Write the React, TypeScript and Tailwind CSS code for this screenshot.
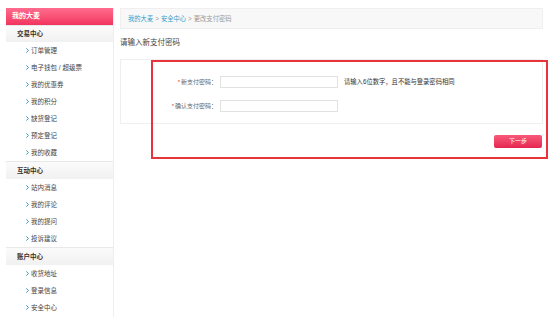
const font = { fontFamily: '"Liberation Sans", "Noto Sans CJK SC", sans-serif' }

const groups = [
  { title: '交易中心', items: ['订单管理', '电子钱包 / 超级票', '我的优惠券', '我的积分', '缺货登记', '预定登记', '我的收藏'] },
  { title: '互动中心', items: ['站内消息', '我的评论', '我的提问', '投诉建议'] },
  { title: '账户中心', items: ['收货地址', '登录信息', '安全中心'] },
]

const Chevron = () => (
  <svg width="3" height="5" viewBox="0 0 3 5" className="mr-[2px] shrink-0">
    <path d="M0.4 0.4 L2.4 2.5 L0.4 4.6" fill="none" stroke="#2d9bc4" strokeWidth="1" />
  </svg>
)

const Sidebar = () => (
  <div className="w-[108px] shrink-0 border-r border-[#eeeeee] min-h-[309px]">
    <div className="h-[17px] bg-gradient-to-b from-[#ff6b8e] to-[#f2325f] text-white text-[7px] font-bold flex items-center pl-[6px]">
      我的大麦
    </div>
    {groups.map((g, gi) => (
      <div key={g.title}>
        <div
          className={`${gi === 0 ? 'h-[17px]' : 'h-[18px]'} bg-gradient-to-b from-[#fbfbfb] to-[#f1f1f1] border-t border-[#e8e8e8] flex items-center pl-[11px] text-[6.5px] font-bold text-[#333]`}
        >
          {g.title}
        </div>
        {g.items.map((it) => (
          <div key={it} className="h-[17px] flex items-center pl-[20px] text-[6.5px] text-[#444]">
            <Chevron />
            {it}
          </div>
        ))}
      </div>
    ))}
  </div>
)

const Field = ({ label, hint }: { label: string; hint?: string }) => (
  <div className="flex items-center h-[12px]">
    <div className="w-[96px] text-right text-[6px] text-[#666] pr-[3px]">
      <span className="text-[#e8304a] mr-[1px]">*</span>
      {label}：
    </div>
    <div className="w-[118px] h-[12px] border border-[#e2e2e2] bg-white" />
    {hint && <div className="ml-[6px] text-[6.3px] text-[#333]">{hint}</div>}
  </div>
)

export default function App() {
  return (
    <div className="w-[555px] h-[317px] bg-white relative overflow-hidden" style={font}>
      <div className="flex pt-[8px] pl-[6px]">
        <Sidebar />
        <div className="ml-[6px] w-[423px] flex flex-col">
          <div className="h-[21px] bg-[#f8f8f8] border border-[#efefef] flex items-center pl-[7px] text-[6.3px] text-[#999]">
            <span className="text-[#3a9cc6]">我的大麦</span>
            <span className="mx-[2px]">&gt;</span>
            <span className="text-[#3a9cc6]">安全中心</span>
            <span className="mx-[2px]">&gt;</span>
            <span>更改支付密码</span>
          </div>
          <div className="mt-[9px] text-[7.5px] text-[#444] h-[10px] leading-[10px]">请输入新支付密码</div>
          <div className="mt-[11px] h-[65px] border border-[#efefef] pt-[16px] flex flex-col gap-[12px] pl-[3px]">
            <Field label="新支付密码" hint="请输入6位数字，且不能与登录密码相同" />
            <Field label="确认支付密码" />
          </div>
          <div className="flex justify-end mt-[11px] pr-[1px]">
            <button className="w-[48px] h-[13px] rounded-[2px] bg-gradient-to-b from-[#f9587a] to-[#e42350] text-white text-[6px] flex items-center justify-center">
              下一步
            </button>
          </div>
        </div>
      </div>
      <div className="absolute left-[151px] top-[60px] w-[397px] h-[99px] border-2 border-[#e8323c]" />
    </div>
  )
}
